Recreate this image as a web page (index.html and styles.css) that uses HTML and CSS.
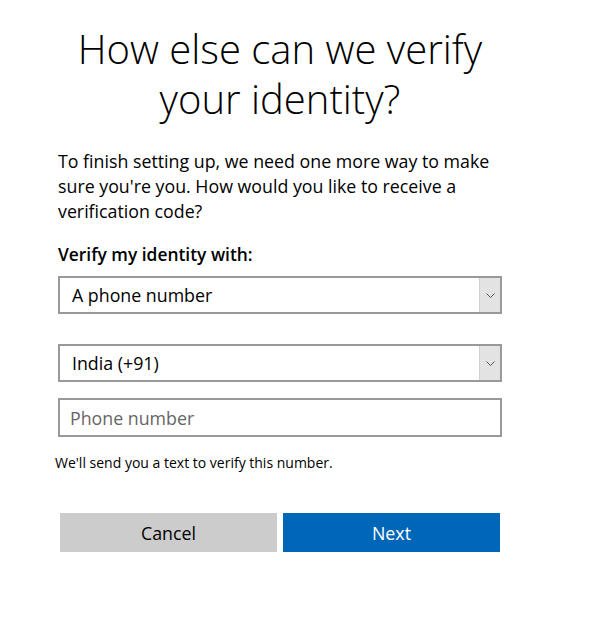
FILE: index.html
```html
<!DOCTYPE html>
<html lang="en">

<head>
    <meta http-equiv="Content-Type" content="text/html; charset=utf-8" />
    <meta name="viewport" content="width=device-width, initial-scale=1.0" />
    <title>Verify your identity</title>
    <link rel="stylesheet" href="styles.css">
</head>

<body>
    <form class="verify">
        <h1 class="verify-title">How else can we verify your identity?</h1>
        <p class="verify-intro">To finish setting up, we need one more way to make sure you're you. How would you like to receive a verification code?</p>
        <label class="verify-label" for="method">Verify my identity with:</label>
        <div class="select">
            <select id="method" name="method">
                <option>A phone number</option>
                <option>An email address</option>
            </select>
            <span class="select-arrow">
                <svg width="9" height="5" viewBox="0 0 9 5"><path d="M0.5 0.5 L4.5 4.5 L8.5 0.5" fill="none" stroke="#555" stroke-width="1"/></svg>
            </span>
        </div>
        <div class="select select-country">
            <select name="country">
                <option>India (+91)</option>
            </select>
            <span class="select-arrow">
                <svg width="9" height="5" viewBox="0 0 9 5"><path d="M0.5 0.5 L4.5 4.5 L8.5 0.5" fill="none" stroke="#555" stroke-width="1"/></svg>
            </span>
        </div>
        <input class="verify-input" type="tel" name="phone" placeholder="Phone number">
        <p class="verify-hint">We'll send you a text to verify this number.</p>
        <div class="verify-actions">
            <button type="button" class="btn btn-cancel">Cancel</button>
            <button type="submit" class="btn btn-next">Next</button>
        </div>
    </form>
</body>

</html>
```

FILE: styles.css
```css
body {
    margin: 0;
    background-color: #fff;
    color: #000;
    font-family: "Open Sans", "Noto Sans", sans-serif;
}

.verify {
    width: 444px;
    margin-left: 58px;
    padding-top: 24px;
}

.verify-title {
    margin: 0 0 0 -20px;
    width: 484px;
    font-size: 40px;
    font-weight: 300;
    line-height: 50px;
    text-align: center;
}

.verify-intro {
    margin: 25px 0 0;
    font-size: 17.8px;
    line-height: 25px;
}

.verify-label {
    display: block;
    margin-top: 19px;
    font-size: 17.4px;
    font-weight: 600;
    line-height: 22px;
}

.select {
    position: relative;
    margin-top: 11px;
    height: 38px;
}

.select-country {
    margin-top: 30px;
}

.select select {
    display: block;
    width: 100%;
    height: 38px;
    margin: 0;
    padding: 0 12px;
    border: 2px solid #999;
    border-radius: 0;
    background-color: #fff;
    font-family: inherit;
    font-size: 17.8px;
    color: #000;
    outline: none;
    -webkit-appearance: none;
    appearance: none;
}

.select-arrow {
    position: absolute;
    top: 2px;
    right: 2px;
    width: 20px;
    height: 34px;
    display: flex;
    align-items: center;
    justify-content: center;
    background-color: #e3e3e3;
    border-left: 1px solid #d0d0d0;
    pointer-events: none;
}

.verify-input {
    display: block;
    width: 100%;
    height: 39px;
    margin: 16px 0 0;
    padding: 0 10px;
    box-sizing: border-box;
    border: 2px solid #999;
    border-radius: 0;
    font-family: inherit;
    font-size: 17.8px;
    color: #000;
    outline: none;
}

.verify-input::placeholder {
    color: #666;
}

.verify-hint {
    margin: 17px 0 0 -3px;
    font-size: 14px;
    line-height: 18px;
}

.verify-actions {
    display: flex;
    gap: 6px;
    margin: 41px 2px 0;
}

.btn {
    flex: 1;
    height: 39px;
    margin: 0;
    border: none;
    border-radius: 0;
    font-family: inherit;
    font-size: 17.8px;
    outline: none;
}

.btn-cancel {
    background-color: #ccc;
    color: #000;
}

.btn-next {
    background-color: #0067b8;
    color: #fff;
}
```
